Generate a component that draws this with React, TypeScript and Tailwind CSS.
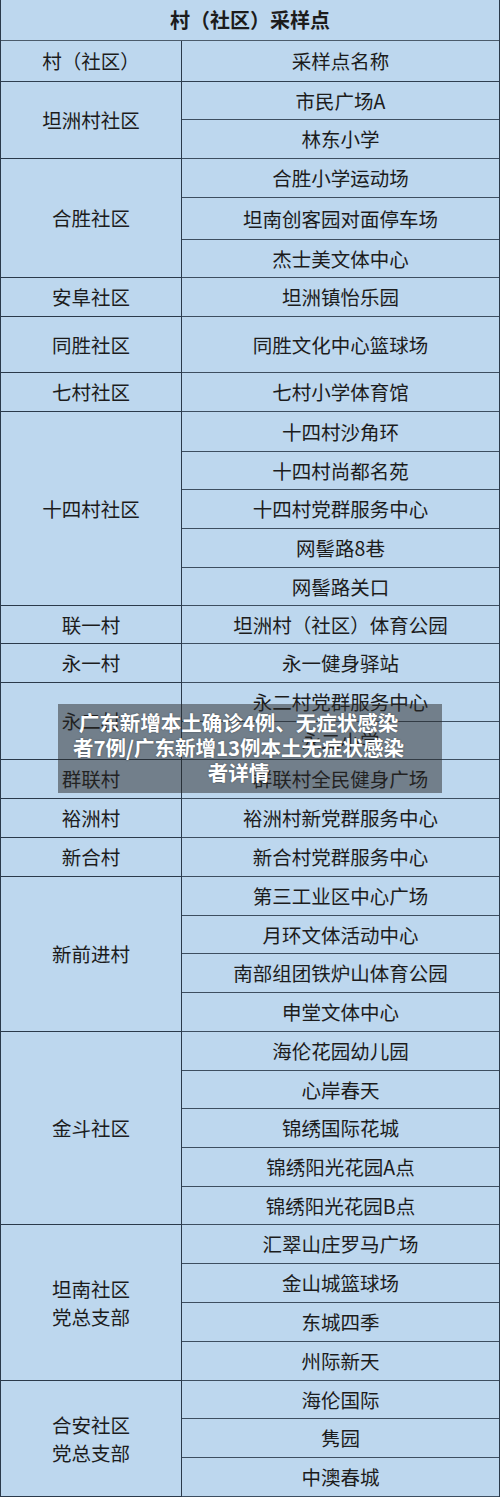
import React from "react";

type Block = {
  name: string[];
  sites: { label: string; h: number }[];
};

const blocks: Block[] = [
  { name: ["坦洲村社区"], sites: [{ label: "市民广场A", h: 38 }, { label: "林东小学", h: 39 }] },
  {
    name: ["合胜社区"],
    sites: [
      { label: "合胜小学运动场", h: 39 },
      { label: "坦南创客园对面停车场", h: 42 },
      { label: "杰士美文体中心", h: 38 },
    ],
  },
  { name: ["安阜社区"], sites: [{ label: "坦洲镇怡乐园", h: 39 }] },
  { name: ["同胜社区"], sites: [{ label: "同胜文化中心篮球场", h: 56 }] },
  { name: ["七村社区"], sites: [{ label: "七村小学体育馆", h: 39 }] },
  {
    name: ["十四村社区"],
    sites: [
      { label: "十四村沙角环", h: 40 },
      { label: "十四村尚都名苑", h: 38 },
      { label: "十四村党群服务中心", h: 39 },
      { label: "网髻路8巷", h: 39 },
      { label: "网髻路关口", h: 38 },
    ],
  },
  { name: ["联一村"], sites: [{ label: "坦洲村（社区）体育公园", h: 38 }] },
  { name: ["永一村"], sites: [{ label: "永一健身驿站", h: 39 }] },
  {
    name: ["永二村"],
    sites: [
      { label: "永二村党群服务中心", h: 39 },
      { label: "永二小学", h: 38 },
    ],
  },
  { name: ["群联村"], sites: [{ label: "群联村全民健身广场", h: 39 }] },
  { name: ["裕洲村"], sites: [{ label: "裕洲村新党群服务中心", h: 39 }] },
  { name: ["新合村"], sites: [{ label: "新合村党群服务中心", h: 39 }] },
  {
    name: ["新前进村"],
    sites: [
      { label: "第三工业区中心广场", h: 39 },
      { label: "月环文体活动中心", h: 38 },
      { label: "南部组团铁炉山体育公园", h: 39 },
      { label: "申堂文体中心", h: 39 },
    ],
  },
  {
    name: ["金斗社区"],
    sites: [
      { label: "海伦花园幼儿园", h: 39 },
      { label: "心岸春天", h: 38 },
      { label: "锦绣国际花城", h: 39 },
      { label: "锦绣阳光花园A点", h: 39 },
      { label: "锦绣阳光花园B点", h: 38 },
    ],
  },
  {
    name: ["坦南社区", "党总支部"],
    sites: [
      { label: "汇翠山庄罗马广场", h: 39 },
      { label: "金山城篮球场", h: 39 },
      { label: "东城四季", h: 39 },
      { label: "州际新天", h: 39 },
    ],
  },
  {
    name: ["合安社区", "党总支部"],
    sites: [
      { label: "海伦国际", h: 38 },
      { label: "隽园", h: 39 },
      { label: "中澳春城", h: 39 },
    ],
  },
];

export default function App() {
  return (
    <div
      className="relative w-[500px] bg-[#bdd7ee] border-x border-[#2b3a4b] text-[19.5px] text-[#1c1c1c]"
      style={{ fontFamily: '"Noto Sans CJK SC", "Noto Sans", sans-serif' }}
    >
      {/* title */}
      <div className="flex h-[41px] items-center justify-center border-b border-[#4b5b6b] font-bold text-[20px]">
        村（社区）采样点
      </div>

      {/* column header */}
      <div className="flex h-[41px] border-b border-[#2f3f50]">
        <div className="flex w-[181px] items-center justify-center border-r border-[#2b3a4b]">
          村（社区）
        </div>
        <div className="flex flex-1 items-center justify-center">采样点名称</div>
      </div>

      {blocks.map((b, i) => (
        <div key={i} className="flex">
          <div className="flex w-[181px] flex-col items-center justify-center border-r border-b border-[#2b3a4b] leading-[28px]">
            {b.name.map((n) => (
              <span key={n}>{n}</span>
            ))}
          </div>
          <div className="flex flex-1 flex-col">
            {b.sites.map((s) => (
              <div
                key={s.label}
                className="flex items-center justify-center border-b border-[#3d4e60]"
                style={{ height: s.h }}
              >
                {s.label}
              </div>
            ))}
          </div>
        </div>
      ))}

      {/* headline overlay */}
      <div className="absolute left-[57px] top-[704px] h-[89px] w-[384px] bg-[rgba(40,40,40,0.5)] pt-[6px] pr-[23px] text-center text-[20.5px] font-bold leading-[25px] text-white [text-shadow:0_0_2px_rgba(0,0,0,0.4)]">
        <div className="whitespace-nowrap">广东新增本土确诊4例、无症状感染</div>
        <div className="whitespace-nowrap">者7例/广东新增13例本土无症状感染</div>
        <div>者详情</div>
      </div>
    </div>
  );
}
